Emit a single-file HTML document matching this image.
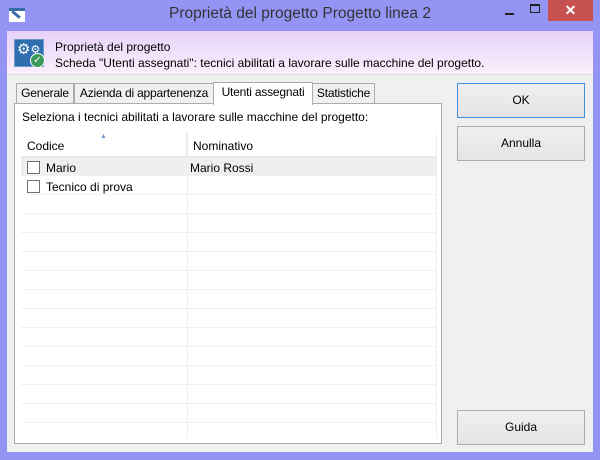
<!DOCTYPE html>
<html><head><meta charset="utf-8"><style>
*{margin:0;padding:0;box-sizing:border-box}
body{width:600px;height:460px;background:#9494f4;font-family:"Liberation Sans",sans-serif;font-size:12px;color:#000;position:relative;overflow:hidden}
.a{position:absolute}
.client{left:7px;top:31px;width:586px;height:421px;background:#f0f0f0}
.hdr{left:7px;top:31px;width:586px;height:44px;background:linear-gradient(#e6d2f8,#fbeffc);border-bottom:1px solid #ddd}
.btn{background:linear-gradient(#f0f0f0,#e4e4e4);border:1px solid #acacac;text-align:center;font-size:12px}
.tab{background:#f0f0f0;border:1px solid #acacac;border-bottom:none;text-align:center;line-height:19px;letter-spacing:-0.2px}
.row{left:21px;width:415px;height:19px;border-bottom:1px solid #f0f0f0}
.cb{width:13px;height:13px;border:1px solid #707070;background:#fff}
</style></head><body>
<div class="a" style="left:9px;top:8px;width:16px;height:14px;background:#fff;border-top:3px solid #3a6ea8"></div>
<div class="a" style="left:11px;top:13px;width:10px;height:3px;background:#3a6ea8;transform:rotate(40deg)"></div>
<div class="a" style="left:0;top:5px;width:600px;text-align:center;font-size:15.5px;color:#333">Proprietà del progetto Progetto linea 2</div>
<div class="a" style="left:505px;top:13px;width:9px;height:2px;background:#222"></div>
<div class="a" style="left:530px;top:4px;width:10px;height:9px;border:1px solid #222;border-top:2px solid #222"></div>
<div class="a" style="left:548px;top:0;width:45px;height:21px;background:#c75050;color:#fff;text-align:center;font-size:14px;line-height:21px;font-weight:bold">✕</div>
<div class="a client"></div>
<div class="a hdr"></div>
<div class="a" style="left:14px;top:39px;width:30px;height:28px;background:#2f6fb0;border:1px solid #6a98c8"></div>
<div class="a" style="left:17px;top:40px;color:#fff;font-size:15px;line-height:20px">⚙<span style="font-size:11px;vertical-align:top">⚙</span></div>
<div class="a" style="left:30px;top:53px;width:15px;height:15px;border-radius:50%;background:#3c9a5a;border:1px solid #fff;color:#fff;font-size:10px;text-align:center;line-height:13px">✓</div>
<div class="a" style="left:55px;top:39px;line-height:16px">Proprietà del progetto<br>Scheda "Utenti assegnati": tecnici abilitati a lavorare sulle macchine del progetto.</div>
<div class="a tab" style="left:16px;top:83px;width:58px;height:21px">Generale</div>
<div class="a tab" style="left:74px;top:83px;width:140px;height:21px">Azienda di appartenenza</div>
<div class="a tab" style="left:312px;top:83px;width:63px;height:21px">Statistiche</div>
<div class="a" style="left:14px;top:103px;width:428px;height:341px;background:#fff;border:1px solid #acacac"></div>
<div class="a tab" style="left:213px;top:82px;width:100px;height:23px;background:#fff;line-height:18px">Utenti assegnati</div>
<div class="a" style="left:22px;top:110px">Seleziona i tecnici abilitati a lavorare sulle macchine del progetto:</div>
<div class="a" style="left:21px;top:133px;width:415px;height:24px;border-bottom:1px solid #e5e5e5"></div>
<div class="a" style="left:187px;top:133px;width:1px;height:306px;background:#f0f0f0"></div>
<div class="a" style="left:186px;top:133px;width:1px;height:24px;background:#e3e8f0"></div>
<div class="a" style="left:100px;top:133px;color:#6b9ac8;font-size:7px">▲</div>
<div class="a" style="left:27px;top:139px">Codice</div>
<div class="a" style="left:193px;top:139px">Nominativo</div>
<div class="a row" style="top:157px;background:#efefef"></div>
<div class="a row" style="top:176px"></div>
<div class="a row" style="top:195px"></div><div class="a row" style="top:214px"></div><div class="a row" style="top:233px"></div><div class="a row" style="top:252px"></div><div class="a row" style="top:271px"></div><div class="a row" style="top:290px"></div><div class="a row" style="top:309px"></div><div class="a row" style="top:328px"></div><div class="a row" style="top:347px"></div><div class="a row" style="top:366px"></div><div class="a row" style="top:385px"></div><div class="a row" style="top:404px"></div>
<div class="a" style="left:436px;top:133px;width:1px;height:306px;background:#f0f0f0"></div>
<div class="a cb" style="left:27px;top:161px"></div>
<div class="a" style="left:46px;top:161px">Mario</div>
<div class="a" style="left:190px;top:161px">Mario Rossi</div>
<div class="a cb" style="left:27px;top:180px"></div>
<div class="a" style="left:46px;top:180px">Tecnico di prova</div>
<div class="a btn" style="left:457px;top:83px;width:128px;height:35px;border-color:#3c8fe0;line-height:33px">OK</div>
<div class="a btn" style="left:457px;top:126px;width:128px;height:35px;line-height:33px">Annulla</div>
<div class="a btn" style="left:457px;top:410px;width:128px;height:35px;line-height:33px">Guida</div>
</body></html>
